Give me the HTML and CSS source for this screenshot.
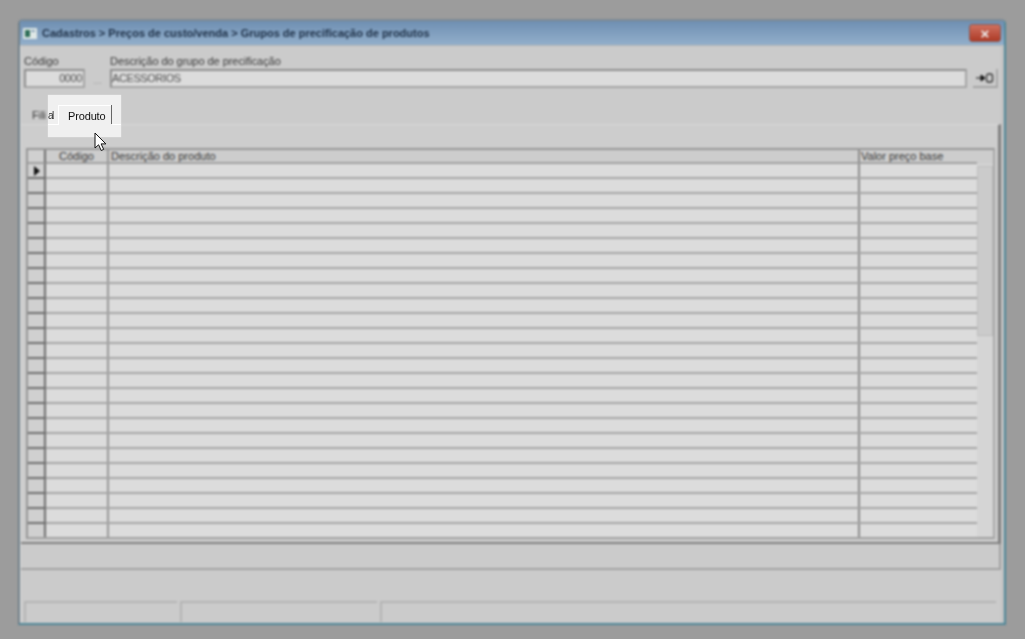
FILE: index.html
```html
<!DOCTYPE html>
<html lang="pt-BR">
<head>
    <meta charset="UTF-8">
    <title>Grupos de precificação de produtos</title>
    <link rel="stylesheet" href="styles.css">
</head>
<body>
    <div class="window">
        <div class="titlebar">
            <svg class="app-icon" width="14" height="11" viewBox="0 0 14 11">
                <rect x="0" y="0" width="14" height="11" fill="#dfe8e6"/>
                <rect x="2" y="2" width="5" height="7" fill="#2f6f58"/>
                <rect x="8" y="2" width="4" height="2" fill="#8fa8bc"/>
            </svg>
            <span class="title">Cadastros &gt; Preços de custo/venda &gt; Grupos de precificação de produtos</span>
            <div class="close"><span>×</span></div>
        </div>

        <div class="client">
            <div class="top-fields">
                <div class="field field-code">
                    <label>Código</label>
                    <div class="input input-code">0000</div>
                </div>
                <div class="dots">...</div>
                <div class="field field-desc">
                    <label>Descrição do grupo de precificação</label>
                    <div class="input">ACESSORIOS</div>
                </div>
                <div class="exit-btn">
                    <svg width="20" height="12" viewBox="0 0 20 12">
                        <path d="M1 6h5V3l4 3-4 3V6" fill="#111" stroke="#111"/>
                        <rect x="11.5" y="2" width="6" height="8" rx="2" fill="none" stroke="#333" stroke-width="1.3"/>
                    </svg>
                </div>
            </div>

            <div class="tabs">
                <span class="tab">Fili</span>
            </div>

            <div class="panel">
                <div class="grid">
                    <div class="grid-head">
                        <div class="c-ind"></div>
                        <div class="c-code">Código</div>
                        <div class="c-desc">Descrição do produto</div>
                        <div class="c-val">Valor preço base</div>
                    </div>
                    <div class="grid-main">
                        <div class="rows">
                            <div class="row"><div class="c-ind"><i class="arrow"></i></div><div class="c-code"></div><div class="c-desc"></div><div class="c-val"></div></div>
                            <div class="row"><div class="c-ind"></div><div class="c-code"></div><div class="c-desc"></div><div class="c-val"></div></div>
                            <div class="row"><div class="c-ind"></div><div class="c-code"></div><div class="c-desc"></div><div class="c-val"></div></div>
                            <div class="row"><div class="c-ind"></div><div class="c-code"></div><div class="c-desc"></div><div class="c-val"></div></div>
                            <div class="row"><div class="c-ind"></div><div class="c-code"></div><div class="c-desc"></div><div class="c-val"></div></div>
                            <div class="row"><div class="c-ind"></div><div class="c-code"></div><div class="c-desc"></div><div class="c-val"></div></div>
                            <div class="row"><div class="c-ind"></div><div class="c-code"></div><div class="c-desc"></div><div class="c-val"></div></div>
                            <div class="row"><div class="c-ind"></div><div class="c-code"></div><div class="c-desc"></div><div class="c-val"></div></div>
                            <div class="row"><div class="c-ind"></div><div class="c-code"></div><div class="c-desc"></div><div class="c-val"></div></div>
                            <div class="row"><div class="c-ind"></div><div class="c-code"></div><div class="c-desc"></div><div class="c-val"></div></div>
                            <div class="row"><div class="c-ind"></div><div class="c-code"></div><div class="c-desc"></div><div class="c-val"></div></div>
                            <div class="row"><div class="c-ind"></div><div class="c-code"></div><div class="c-desc"></div><div class="c-val"></div></div>
                            <div class="row"><div class="c-ind"></div><div class="c-code"></div><div class="c-desc"></div><div class="c-val"></div></div>
                            <div class="row"><div class="c-ind"></div><div class="c-code"></div><div class="c-desc"></div><div class="c-val"></div></div>
                            <div class="row"><div class="c-ind"></div><div class="c-code"></div><div class="c-desc"></div><div class="c-val"></div></div>
                            <div class="row"><div class="c-ind"></div><div class="c-code"></div><div class="c-desc"></div><div class="c-val"></div></div>
                            <div class="row"><div class="c-ind"></div><div class="c-code"></div><div class="c-desc"></div><div class="c-val"></div></div>
                            <div class="row"><div class="c-ind"></div><div class="c-code"></div><div class="c-desc"></div><div class="c-val"></div></div>
                            <div class="row"><div class="c-ind"></div><div class="c-code"></div><div class="c-desc"></div><div class="c-val"></div></div>
                            <div class="row"><div class="c-ind"></div><div class="c-code"></div><div class="c-desc"></div><div class="c-val"></div></div>
                            <div class="row"><div class="c-ind"></div><div class="c-code"></div><div class="c-desc"></div><div class="c-val"></div></div>
                            <div class="row"><div class="c-ind"></div><div class="c-code"></div><div class="c-desc"></div><div class="c-val"></div></div>
                            <div class="row"><div class="c-ind"></div><div class="c-code"></div><div class="c-desc"></div><div class="c-val"></div></div>
                            <div class="row"><div class="c-ind"></div><div class="c-code"></div><div class="c-desc"></div><div class="c-val"></div></div>
                            <div class="row"><div class="c-ind"></div><div class="c-code"></div><div class="c-desc"></div><div class="c-val"></div></div>
                        </div>
                        <div class="scrollbar"><div class="thumb"></div></div>
                    </div>
                </div>
            </div>

            <div class="msg-bar"></div>

            <div class="status-bar">
                <div class="status s1"></div>
                <div class="status s2"></div>
                <div class="status s3"></div>
            </div>
        </div>
    </div>

    <!-- Destaque da aba Produto -->
    <div class="spotlight">
        <span class="spot-filial">al</span>
        <div class="spot-tab">Produto</div>
        <div class="spot-line"></div>
    </div>

    <svg class="cursor" width="14" height="20" viewBox="0 0 14 20">
        <path d="M1 1v15l3.6-3.2 2.6 5.7 2.5-1.1-2.6-5.5h4.8z" fill="#fff" stroke="#111" stroke-width="1"/>
    </svg>
</body>
</html>
```

FILE: styles.css
```css
body {
    margin: 0;
    padding: 19px 0 0 18px;
    box-sizing: border-box;
    height: 639px;
    overflow: hidden;
    position: relative;
    background-color: #9c9c9c;
    font-family: "Liberation Sans", Arial, sans-serif;
    font-size: 11px;
    color: #383838;
}
.window {
    width: 988px;
    height: 606px;
    box-sizing: border-box;
    display: flex;
    flex-direction: column;
    border: 2px solid #6f7f88;
    border-top-color: #7d8a94;
    border-right-color: #4f8798;
    border-bottom-color: #4f8798;
    border-radius: 5px 5px 0 0;
    background-color: #cbcbcb;
    filter: blur(0.8px);
}
.titlebar {
    height: 24px;
    flex: none;
    display: flex;
    align-items: center;
    padding: 0 3px 0 3px;
    background: linear-gradient(#6f8fb2, #93afcb);
}
.app-icon {
    margin-right: 5px;
}
.title {
    font-size: 11px;
    font-weight: bold;
    color: #1f3148;
    flex: 1;
}
.close {
    width: 32px;
    height: 18px;
    display: flex;
    justify-content: center;
    align-items: center;
    border: 1px solid #8a5a55;
    border-radius: 3px;
    box-sizing: border-box;
    background: linear-gradient(#cf7160, #ad3a26);
    color: #eee;
    font-size: 15px;
    font-weight: bold;
    line-height: 1;
}
.client {
    flex: 1;
    display: flex;
    flex-direction: column;
    border-top: 1px solid #b5b5b5;
    border-left: 1px solid #dcdcdc;
    border-right: 3px solid #c4c4c4;
}
.top-fields {
    height: 42px;
    flex: none;
    display: flex;
    align-items: flex-end;
    padding: 0 3px 0 3px;
    box-sizing: border-box;
}
.field {
    display: flex;
    flex-direction: column;
}
.field label {
    line-height: 13px;
    height: 14px;
    letter-spacing: -0.05px;
}
.field-code {
    width: 61px;
}
.field-desc {
    flex: 1;
}
.input {
    height: 19px;
    box-sizing: border-box;
    border: 2px solid #8f8f8f;
    border-right-color: #a5a5a5;
    border-bottom-color: #a5a5a5;
    background-color: #dcdcdc;
    line-height: 15px;
    padding: 0 1px 0 0;
    color: #505050;
    letter-spacing: -0.4px;
}
.input-code {
    text-align: right;
}
.dots {
    width: 25px;
    height: 19px;
    line-height: 24px;
    text-align: center;
    color: #999;
    font-size: 10px;
}
.exit-btn {
    width: 25px;
    height: 19px;
    margin-left: 6px;
    display: flex;
    align-items: center;
    justify-content: center;
    border-right: 2px solid #a9a9a9;
    border-bottom: 2px solid #a3a3a3;
    box-sizing: border-box;
}
.tabs {
    height: 36px;
    flex: none;
    display: flex;
    align-items: flex-end;
    padding-left: 11px;
    box-sizing: border-box;
}
.tab {
    line-height: 16px;
    height: 17px;
}
.panel {
    height: 420px;
    flex: none;
    box-sizing: border-box;
    background-color: #cdcdcd;
    border-top: 1px solid #d8d8d8;
    border-right: 3px solid #808080;
    border-bottom: 2px solid #808080;
    padding: 23px 0 0 5px;
}
.grid {
    width: 969px;
    height: 391px;
    box-sizing: border-box;
    overflow: hidden;
    border: 2px solid #969696;
    border-right-color: #a8a8a8;
    border-bottom-color: #a0a0a0;
    background-color: #d2d2d2;
}
.grid-head,
.row {
    display: flex;
    height: 15px;
    box-sizing: border-box;
}
.grid-head {
    height: 14px;
    background-color: #cdcdcd;
}
.grid-head > div {
    height: 14px;
    box-sizing: border-box;
    border-bottom: 2px solid #a0a0a0;
}
.grid-head .c-val {
    padding-left: 1px;
}
.c-ind {
    width: 18px;
    flex: none;
    box-sizing: border-box;
    border-right: 2px solid #6e6e6e;
    background-color: #d0d0d0;
    position: relative;
}
.c-code {
    width: 63px;
    flex: none;
    box-sizing: border-box;
    border-right: 2px solid #989898;
    text-align: center;
    line-height: 13px;
}
.c-desc {
    width: 751px;
    flex: none;
    box-sizing: border-box;
    border-right: 2px solid #8c8c8c;
    padding-left: 2px;
    line-height: 13px;
}
.c-val {
    width: 117px;
    flex: none;
    box-sizing: border-box;
    padding-left: 2px;
    line-height: 13px;
}
.grid-main {
    display: flex;
}
.rows {
    width: 949px;
    flex: none;
}
.row {
    border-bottom: 2px solid #a5a5a5;
    background-color: #dcdcdc;
}
.row .c-ind {
    border-bottom: 2px solid #6e6e6e;
    height: 15px;
}
.arrow {
    position: absolute;
    left: 6px;
    top: 2px;
    border-left: 6px solid #111;
    border-top: 5px solid transparent;
    border-bottom: 5px solid transparent;
}
.scrollbar {
    flex: 1;
    height: 375px;
    background-color: #d5d5d5;
}
.thumb {
    height: 170px;
    margin-top: 2px;
    background-color: #cbcbcb;
    border: 1px solid #bcbcbc;
    box-sizing: border-box;
}
.msg-bar {
    height: 26px;
    flex: none;
    box-sizing: border-box;
    border-bottom: 2px solid #a2a2a2;
    border-right: 2px solid #a2a2a2;
}
.status-bar {
    flex: 1;
    display: flex;
    align-items: flex-end;
    gap: 3px;
    padding: 0 5px 1px 3px;
}
.status {
    height: 21px;
    box-sizing: border-box;
    border-top: 2px solid #b4b4b4;
    border-left: 2px solid #b4b4b4;
}
.s1 {
    width: 153px;
}
.s2 {
    width: 197px;
}
.s3 {
    flex: 1;
}

/* Destaque por cima da janela */
.spotlight {
    position: absolute;
    left: 48px;
    top: 95px;
    width: 73px;
    height: 42px;
    background-color: #f0f0f0;
    box-shadow: 0 0 1px #f0f0f0;
    color: #111;
    font-size: 11px;
}
.spotlight::before,
.spotlight::after {
    content: "";
    position: absolute;
    top: 29px;
    height: 1px;
    background-color: #fff;
}
.spotlight::before {
    left: 0;
    width: 10px;
}
.spotlight::after {
    left: 64px;
    width: 9px;
}
.spot-filial {
    position: absolute;
    left: 0;
    top: 15px;
    font-size: 10px;
    letter-spacing: -1.5px;
    color: #333;
}
.spot-tab {
    position: absolute;
    left: 10px;
    top: 10px;
    width: 53px;
    height: 20px;
    line-height: 21px;
    padding-left: 9px;
    box-sizing: border-box;
    border-left: 1px solid #fff;
    border-top: 1px solid #fff;
    white-space: nowrap;
    letter-spacing: -0.15px;
}
.spot-line {
    position: absolute;
    left: 63px;
    top: 10px;
    height: 19px;
    border-left: 1px solid #666;
}
.cursor {
    position: absolute;
    left: 94px;
    top: 132px;
}
```
